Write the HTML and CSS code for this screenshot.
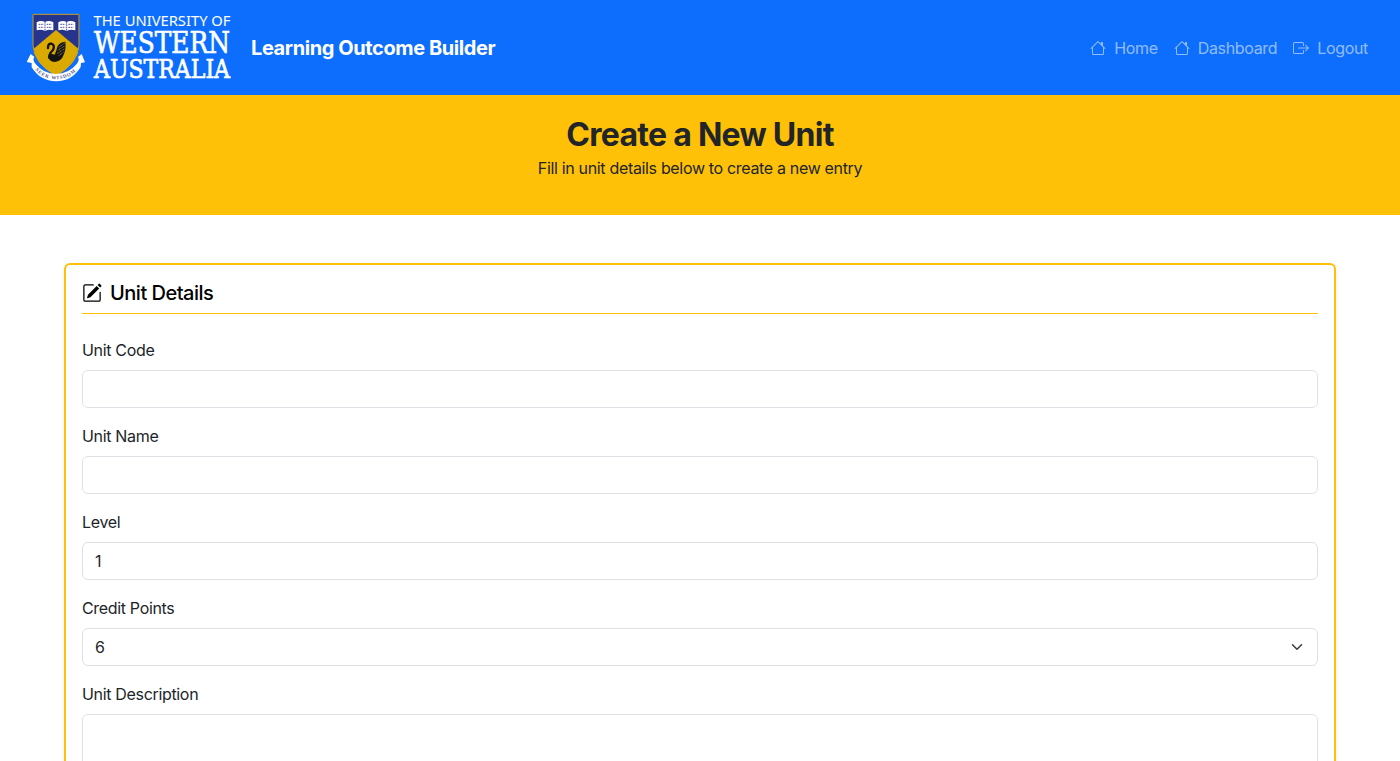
FILE: index.html
```html
<!DOCTYPE html>
<html lang="en">
<head>
<meta charset="utf-8">
<title>Create a New Unit</title>
<link rel="stylesheet" href="styles.css">
</head>
<body>
<nav class="navbar">
  <a class="brand">
    <svg class="logo" viewBox="0 0 215 80" role="img">
      <g transform="scale(.33333)">
        <path class="navy" d="M38 24H178V118Q176 172 108 210Q40 172 38 118Z"/>
        <path class="gold" d="M108 72L41 128Q48 176 108 210Q168 176 175 128Z"/>
        <path class="shield-edge" d="M39 25H177V118Q175 172 108 208Q41 172 39 118Z"/>
        <path class="white" d="M50 49Q63 42 75 48Q87 42 100 49V73Q87 69 75 75Q63 69 50 73Z M115 49Q128 42 140 48Q152 42 166 49V73Q152 69 140 75Q128 69 115 73Z"/>
        <path class="page-lines" d="M75 48V75M140 48V75M56 55H71M56 64H71M80 55H95M80 64H95M121 55H136M121 64H136M145 55H160M145 64H160"/>
        <path class="neck" d="M84 126Q84 112 94 113Q106 117 99 132Q86 145 88 155"/>
        <path class="black" d="M84 150Q92 140 104 146Q110 132 112 122Q118 109 136 107Q139 128 131 146Q124 166 104 168Q86 166 84 150Z"/>
        <path class="feather" d="M116 124L134 111M113 133L135 119M112 142L134 128M116 149L131 138"/>
        <path class="white" d="M32 144L43 153Q36 161 47 174Q70 203 108 204Q147 203 170 174Q180 161 174 153L185 144L195 169L183 171L182 183Q157 225 108 226Q60 225 35 184L35 171L20 168Z"/>
        <path id="motto" class="motto-path" d="M40 184Q64 219 108 220Q152 219 178 184"/>
        <text class="motto"><textPath href="#motto" textLength="136" startOffset="9">SEEK WISDOM</textPath></text>
      </g>
      <text class="logo-small" x="73.5" y="20" textLength="137" lengthAdjust="spacingAndGlyphs">THE UNIVERSITY OF</text>
      <text class="logo-west" x="74" y="47.3" textLength="136" lengthAdjust="spacingAndGlyphs">WESTERN</text>
      <text class="logo-aus" x="74" y="71.500" textLength="136" lengthAdjust="spacingAndGlyphs">AUSTRALIA</text>
    </svg>
    <span class="brand-name">Learning Outcome Builder</span>
  </a>
  <div class="nav-links">
    <a class="nav-link"><svg class="icon" viewBox="0 0 16 16"><path d="M8.707 1.5a1 1 0 0 0-1.414 0L.646 8.146a.5.5 0 0 0 .708.708L2 8.207V13.5A1.5 1.5 0 0 0 3.5 15h9a1.5 1.5 0 0 0 1.5-1.5V8.207l.646.647a.5.5 0 0 0 .708-.708L13 5.793V2.5a.5.5 0 0 0-.5-.5h-1a.5.5 0 0 0-.5.5v1.293zM13 7.207V13.5a.5.5 0 0 1-.5.5h-9a.5.5 0 0 1-.5-.5V7.207l5-5z"/></svg><span>Home</span></a>
    <a class="nav-link"><svg class="icon" viewBox="0 0 16 16"><path d="M8.707 1.5a1 1 0 0 0-1.414 0L.646 8.146a.5.5 0 0 0 .708.708L2 8.207V13.5A1.5 1.5 0 0 0 3.5 15h9a1.5 1.5 0 0 0 1.5-1.5V8.207l.646.647a.5.5 0 0 0 .708-.708L13 5.793V2.5a.5.5 0 0 0-.5-.5h-1a.5.5 0 0 0-.5.5v1.293zM13 7.207V13.5a.5.5 0 0 1-.5.5h-9a.5.5 0 0 1-.5-.5V7.207l5-5z"/></svg><span>Dashboard</span></a>
    <a class="nav-link"><svg class="icon" viewBox="0 0 16 16"><path fill-rule="evenodd" d="M10 12.5a.5.5 0 0 1-.5.5h-8a.5.5 0 0 1-.5-.5v-9a.5.5 0 0 1 .5-.5h8a.5.5 0 0 1 .5.5v2a.5.5 0 0 0 1 0v-2A1.5 1.5 0 0 0 9.500 2h-8A1.500 1.500 0 0 0 0 3.500v9A1.500 1.500 0 0 0 1.500 14h8a1.500 1.500 0 0 0 1.500-1.500v-2a.5.5 0 0 0-1 0z"/><path fill-rule="evenodd" d="M15.854 8.354a.5.5 0 0 0 0-.708l-3-3a.5.5 0 0 0-.708.708L14.293 7.500H5.500a.5.5 0 0 0 0 1h8.793l-2.147 2.146a.5.5 0 0 0 .708.708z"/></svg><span>Logout</span></a>
  </div>
</nav>
<header class="hero">
  <h1 class="hero-title">Create a New Unit</h1>
  <p class="hero-sub">Fill in unit details below to create a new entry</p>
</header>
<main class="container">
  <form class="card">
    <h2 class="card-title"><svg class="icon-lg" viewBox="0 0 16 16"><path d="M15.502 1.940a.5.5 0 0 1 0 .706L14.459 3.690l-2-2L13.502.646a.5.5 0 0 1 .707 0l1.293 1.293zm-1.750 2.456-2-2L4.939 9.210a.5.5 0 0 0-.121.196l-.805 2.414a.25.25 0 0 0 .316.316l2.414-.805a.5.5 0 0 0 .196-.12l6.813-6.814z"/><path fill-rule="evenodd" d="M1 13.500A1.500 1.500 0 0 0 2.500 15h11a1.500 1.500 0 0 0 1.500-1.500v-6a.5.5 0 0 0-1 0v6a.5.5 0 0 1-.5.5h-11a.5.5 0 0 1-.5-.5v-11a.5.5 0 0 1 .5-.5H9a.5.5 0 0 0 0-1H2.500A1.500 1.500 0 0 0 1 2.500z"/></svg><span>Unit Details</span></h2>
    <div class="field"><label class="label">Unit Code</label><div class="control"></div></div>
    <div class="field"><label class="label">Unit Name</label><div class="control"></div></div>
    <div class="field"><label class="label">Level</label><div class="control">1</div></div>
    <div class="field"><label class="label">Credit Points</label><div class="control select"><span>6</span><svg class="chevron" viewBox="0 0 16 16"><path d="m2 5 6 6 6-6"/></svg></div></div>
    <div class="field"><label class="label">Unit Description</label><div class="control area"></div></div>
  </form>
</main>
</body>
</html>
```
FILE: styles.css
```css
* { box-sizing: border-box; }
html { height: 100%; overflow: hidden; }
body {
  display: flex;
  flex-direction: column;
  margin: 0;
  height: 100%;
  overflow: hidden;
  background: #fff;
  color: #212529;
  font: 400 16px/24px Inter, "Liberation Sans", sans-serif;
  letter-spacing: -.33px;
}
.navbar {
  display: flex;
  flex: none;
  align-items: center;
  justify-content: space-between;
  height: 95px;
  padding: 0 32px 0 20px;
  background: #0d6efd;
}
.brand { display: flex; align-items: center; gap: 16px; color: #fff; }
.logo { width: 215px; height: 80px; margin-bottom: 3px; display: block; }
.brand-name { font-size: 20px; font-weight: 700; letter-spacing: -.41px; line-height: 30px; }
.navy { fill: #27348b; }
.gold { fill: #daaa00; }
.shield-edge { fill: none; stroke: #c9a227; stroke-width: 3; }
.white { fill: #fff; }
.page-lines { fill: none; stroke: #27348b; stroke-width: 2.500; stroke-dasharray: 5 2; }
.black { fill: #15130f; }
.neck { fill: none; stroke: #15130f; stroke-width: 7; stroke-linecap: round; }
.feather { fill: none; stroke: #cfc6a4; stroke-width: 2; stroke-dasharray: 3 2; }
.motto-path { fill: none; }
.motto { font: 700 15px "Liberation Serif", serif; fill: #4c5a91; letter-spacing: 0; }
.logo-small { font: 400 14.500px "Noto Sans", sans-serif; fill: #fff; letter-spacing: 0; }
.logo-west, .logo-aus { fill: #fff; stroke: #fff; stroke-width: .7; letter-spacing: 0; }
.logo-west { font: 400 29.500px "DejaVu Serif", serif; }
.logo-aus { font: 400 26px "DejaVu Serif", serif; }
.nav-links { display: flex; gap: 16px; }
.nav-link { display: flex; align-items: center; gap: 8px; color: rgba(255, 255, 255, .55); }
.icon { width: 16px; height: 16px; fill: currentColor; }
.hero { flex: none; height: 120px; padding-top: 20px; background: #ffc107; text-align: center; }
.hero-title { margin: 0 0 2px; font-size: 32px; line-height: 39px; font-weight: 700; letter-spacing: -.72px; }
.hero-sub { margin: 0; }
.container { flex: 1; min-height: 0; padding: 48px 64px 0; overflow: hidden; }
.card {
  height: 640px;
  padding: 12px 16px;
  border: 2px solid #ffc107;
  border-radius: 6px;
  box-shadow: 0 2px 4px rgba(0, 0, 0, .075);
}
.card-title {
  display: flex;
  align-items: center;
  gap: 8px;
  height: 37px;
  margin: 0 0 24px;
  padding-bottom: 4px;
  border-bottom: 1px solid #ffc107;
  color: #000;
  font-size: 20px;
  font-weight: 500;
  letter-spacing: -.5px;
}
.icon-lg { width: 20px; height: 20px; fill: currentColor; }
.field { margin-bottom: 16px; }
.label { display: block; margin-bottom: 8px; }
.control {
  height: 38px;
  padding: 6px 12px;
  border: 1px solid #dee2e6;
  border-radius: 6px;
  background: #fff;
}
.select { display: flex; align-items: center; justify-content: space-between; }
.chevron { width: 16px; height: 12px; fill: none; stroke: #343a40; stroke-width: 2; stroke-linecap: round; stroke-linejoin: round; }
.area { height: 120px; }
```
